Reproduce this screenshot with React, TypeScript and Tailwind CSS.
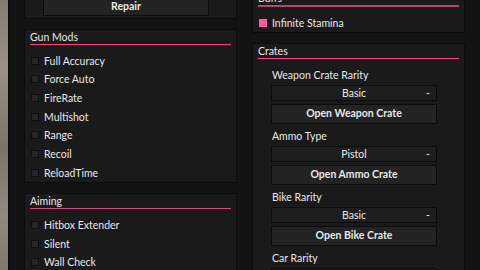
import React from "react";

const gunMods = ["Full Accuracy", "Force Auto", "FireRate", "Multishot", "Range", "Recoil", "ReloadTime"];
const aiming = ["Hitbox Extender", "Silent", "Wall Check"];

const crates = [
  { label: "Weapon Crate Rarity", value: "Basic", button: "Open Weapon Crate" },
  { label: "Ammo Type", value: "Pistol", button: "Open Ammo Crate" },
  { label: "Bike Rarity", value: "Basic", button: "Open Bike Crate" },
  { label: "Car Rarity", value: "Basic", button: "Open Car Crate" },
];

function Toggle({ text, on }: { text: string; on?: boolean }) {
  return (
    <div className="flex h-[18.67px] items-center gap-[5px]">
      <div
        className={
          on
            ? "ml-px h-[8px] w-[8px] bg-[#ff5c9d]"
            : "ml-px h-[8px] w-[8px] border border-[#0e0e0e] bg-[#262626]"
        }
      />
      <span className="leading-[12px]">{text}</span>
    </div>
  );
}

function Title({ text, line }: { text: string; line: string }) {
  return (
    <>
      <div className="h-[14px] leading-[14px]">{text}</div>
      <div className={line} />
    </>
  );
}

export default function App() {
  return (
    <div className="flex h-[270px] w-[480px] overflow-hidden bg-[#131313] font-['Lato',sans-serif] text-[10.5px] text-[#e8e8e8]">
      {/* game world peeking in on the left */}
      <div className="w-[8px] shrink-0 bg-[linear-gradient(180deg,#857d71,#9a9184_25%,#7a7367_55%,#918a7e_80%,#7f786c)]" />
      <div className="w-[2px] shrink-0 bg-[#0a0a0a]" />

      <div className="flex flex-1 gap-[15px] pl-[14px] pr-[7px]">
        {/* left column */}
        <div className="flex w-[213px] shrink-0 flex-col gap-[10px]">
          <div className="-mt-[5px] border border-[#0b0b0b] bg-[#1a1a1a] px-[5px] pt-px pb-[2px]">
            <button className="ml-[13px] flex h-[19px] w-[166px] items-center justify-center border border-[#0c0c0c] bg-[#232323] font-bold text-[#e8e8e8]">
              Repair
            </button>
          </div>

          <div className="border border-[#0b0b0b] bg-[#1a1a1a] px-[5px]">
            <Title text="Gun Mods" line="h-px bg-[#ff3d85]" />
            <div className="mt-[6.5px]">
              {gunMods.map((m) => (
                <Toggle key={m} text={m} />
              ))}
            </div>
          </div>

          <div className="border border-[#0b0b0b] bg-[#1a1a1a] px-[5px]">
            <Title text="Aiming" line="h-px bg-[#d9487c]" />
            <div className="mt-[6.5px]">
              {aiming.map((m) => (
                <Toggle key={m} text={m} />
              ))}
            </div>
          </div>
        </div>

        {/* right column */}
        <div className="flex w-[213px] shrink-0 flex-col gap-[10px]">
          <div className="-mt-[10px] border border-[#0b0b0b] bg-[#1a1a1a] px-[5px]">
            <Title text="Buffs" line="h-[2px] bg-[#b8436d]" />
            <div className="mt-[6.5px]">
              <Toggle text="Infinite Stamina" on />
            </div>
          </div>

          <div className="border border-[#0b0b0b] bg-[#1a1a1a] px-[5px]">
            <Title text="Crates" line="h-px bg-[#ff3d85]" />
            <div className="mt-[4px]">
              {crates.map((c) => (
                <div key={c.label}>
                  <div className="ml-[14px] h-[22px] pt-[6px] leading-[12px]">{c.label}</div>
                  <div className="ml-[13px] flex h-[16px] w-[166px] items-center justify-between border border-[#0c0c0c] bg-[#1e1e1e] px-[6px] leading-[12px]">
                    <span className="invisible">-</span>
                    <span>{c.value}</span>
                    <span>-</span>
                  </div>
                  <button className="mt-[3px] ml-[13px] flex h-[20px] w-[166px] items-center justify-center border border-[#0c0c0c] bg-[#232323] font-bold text-[#e8e8e8]">
                    {c.button}
                  </button>
                </div>
              ))}
            </div>
          </div>
        </div>

        {/* scrollbar rails */}
        <div className="ml-auto flex w-[8px] shrink-0">
          <div className="w-px bg-[#0a0a0a]" />
          <div className="w-[3px] bg-[#1c1c1c]" />
          <div className="w-px bg-[#0a0a0a]" />
          <div className="flex-1 bg-[#1a1a1a]" />
        </div>
      </div>
    </div>
  );
}
